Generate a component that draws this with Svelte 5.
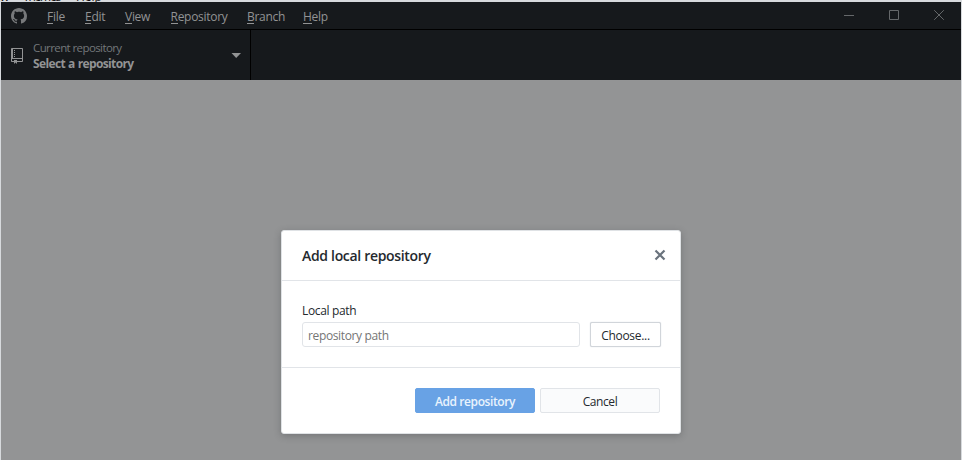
<script>
  const menus = [
    { label: 'File', width: 38 },
    { label: 'Edit', width: 40 },
    { label: 'View', width: 45.5 },
    { label: 'Repository', width: 76.5 },
    { label: 'Branch', width: 56 },
    { label: 'Help', width: 46 }
  ];
  let path = $state('');
</script>

<div class="desktop">
  <div class="behind"><span>w</span><span>Themes</span><span>Help</span></div>
  <div class="window">
    <header class="titlebar">
      <svg class="mark" width="16" height="16" viewBox="0 0 16 16"><path fill="currentColor" d="M8 0C3.58 0 0 3.58 0 8c0 3.54 2.29 6.53 5.47 7.59.4.07.55-.17.55-.38 0-.19-.01-.82-.01-1.49-2.01.37-2.53-.49-2.69-.94-.09-.23-.48-.94-.82-1.13-.28-.15-.68-.52-.01-.53.63-.01 1.08.58 1.23.82.72 1.21 1.87.87 2.33.66.07-.52.28-.87.51-1.07-1.78-.2-3.64-.89-3.64-3.95 0-.87.31-1.59.82-2.15-.08-.2-.36-1.02.08-2.12 0 0 .67-.21 2.2.82.64-.18 1.32-.27 2-.27s1.36.09 2 .27c1.53-1.04 2.2-.82 2.2-.82.44 1.1.16 1.92.08 2.12.51.56.82 1.27.82 2.15 0 3.07-1.87 3.75-3.65 3.95.29.25.54.73.54 1.48 0 1.07-.01 1.93-.01 2.2 0 .21.15.46.55.38A8.01 8.01 0 0 0 16 8c0-4.42-3.58-8-8-8z" /></svg>
      <nav>
        {#each menus as m}
          <span class="menu" style="width: {m.width}px"><u>{m.label[0]}</u>{m.label.slice(1)}</span>
        {/each}
      </nav>
      <div class="controls">
        <svg width="45" height="27" viewBox="0 0 45 27"><path d="M18 13.5h10" /></svg>
        <svg width="45" height="27" viewBox="0 0 45 27"><path d="M18.5 8.5h9v9h-9z" /></svg>
        <svg width="45" height="27" viewBox="0 0 45 27"><path d="M18.200 8.200l9.600 9.600M27.800 8.200l-9.600 9.600" /></svg>
      </div>
    </header>
    <div class="toolbar">
      <div class="repo">
        <svg class="book" width="12" height="16" viewBox="0 0 12 16"><path fill="currentColor" fill-rule="evenodd" d="M4 9H3V8h1v1zm0-3H3v1h1V6zm0-2H3v1h1V4zm0-2H3v1h1V2zm8-1v12c0 .55-.45 1-1 1H6v2l-1.500-1.500L3 16v-2H1c-.55 0-1-.45-1-1V1c0-.55.45-1 1-1h10c.55 0 1 .45 1 1zm-1 10H1v2h2v-1h3v1h5v-2zm0-10H2v9h9V1z" /></svg>
        <div class="labels">
          <span class="desc">Current repository</span>
          <strong>Select a repository</strong>
        </div>
        <svg class="arrow" width="10" height="5" viewBox="0 0 10 5"><path fill="currentColor" d="M.5 0l4.700 5 4.800-5z" /></svg>
      </div>
    </div>
    <main>
      <section class="dialog">
        <div class="head">
          <h1>Add local repository</h1>
          <svg width="12" height="12" viewBox="0 0 12 12"><path d="M1.500 1.500l9 9M10.500 1.500l-9 9" stroke="#6a737d" stroke-width="2.200" /></svg>
        </div>
        <div class="body">
          <label for="path">Local path</label>
          <div class="row">
            <input id="path" placeholder="repository path" bind:value={path} />
            <button class="choose">Choose...</button>
          </div>
        </div>
        <div class="foot">
          <button class="primary">Add repository</button>
          <button class="cancel">Cancel</button>
        </div>
      </section>
    </main>
  </div>
</div>

<style>
  :global(body) { margin: 0; overflow: hidden; }
  .desktop, .desktop * { box-sizing: border-box; }
  .desktop {
    width: 962px; height: 460px; display: flex; flex-direction: column;
    background: #d7dadd; overflow: hidden;
    font: 12px/16px "Open Sans", "Noto Sans", sans-serif;
  }
  .behind { height: 2px; flex: none; overflow: hidden; display: flex; line-height: 16px; color: #111; }
  .behind span { margin-top: -11px; }
  .behind span:nth-child(1) { width: 23px; }
  .behind span:nth-child(2) { width: 53px; letter-spacing: -1.2px; }
  .window { width: 960px; height: 458px; margin-left: 1px; display: flex; flex-direction: column; background: #939495; }
  .titlebar { height: 28px; flex: none; display: flex; background: #16191c; border-bottom: 1px solid #000; color: #929394; }
  .mark { margin: 6px 0 0 10px; color: #77797b; flex: none; }
  nav { display: flex; margin-left: 20px; padding-top: 7px; letter-spacing: -.28px; }
  .menu { flex: none; white-space: nowrap; }
  u { text-decoration: none; box-shadow: inset 0 -1px #929394; display: inline-block; height: 15px; line-height: 16px; }
  .controls { margin-left: auto; display: flex; }
  .controls path { fill: none; stroke: #65686a; stroke-width: 1; }
  .toolbar { height: 50px; flex: none; background: #16191c; display: flex; }
  .repo { width: 250px; display: flex; align-items: center; border-right: 1px solid #000; padding: 0 9px 0 10px; color: #929394; }
  .book { flex: none; margin-top: 2px; }
  .labels { display: flex; flex-direction: column; margin-left: 10px; padding-top: 2px; white-space: nowrap; }
  .desc { color: #73777a; font-size: 11.5px; letter-spacing: -.6px; }
  strong { font-weight: 700; letter-spacing: -.64px; word-spacing: .6px; }
  .arrow { margin-left: auto; margin-top: 1px; }
  main { flex: 1; padding: 150px 0 0 280px; }
  .dialog {
    width: 400px; height: 204px; background: #fff; border: 1px solid #dfe2e5; border-radius: 3px;
    box-shadow: 0 2px 7px rgba(40, 44, 48, .28); color: #24292e;
  }
  .head { height: 50px; display: flex; align-items: center; justify-content: space-between; padding: 0 14px 2px 20px; border-bottom: 1px solid #e1e4e8; }
  h1 { margin: 2px 0 0; font-size: 14px; line-height: 20px; font-weight: 600; letter-spacing: -.32px; }
  .body { height: 87px; padding: 22px 20px 0; border-bottom: 1px solid #e1e4e8; }
  label { display: block; height: 19px; letter-spacing: -.34px; }
  .row { display: flex; justify-content: space-between; }
  input, button { font: inherit; height: 25px; border: 1px solid #e1e4e8; border-radius: 3px; color: #24292e; }
  input { width: 278px; padding: 2px 5px 0; letter-spacing: -.36px; background: #fff; outline: none; }
  input::placeholder { color: #757575; opacity: 1; }
  button { padding: 2px 0 0; background: #fafbfc; border-radius: 2px; letter-spacing: -.4px; white-space: nowrap; }
  .choose { width: 71px; margin-right: -1px; background: #fff; border-color: #d1d5da; box-shadow: 0 0 1px #c2c7d0; letter-spacing: -.3px; }
  .foot { display: flex; justify-content: flex-end; gap: 5px; padding: 20px 20px 0; }
  .foot button { width: 120px; }
  .foot .primary { background: #68a2e5; border-color: #68a2e5; color: #e9f3fd; font-weight: 600; }
</style>
